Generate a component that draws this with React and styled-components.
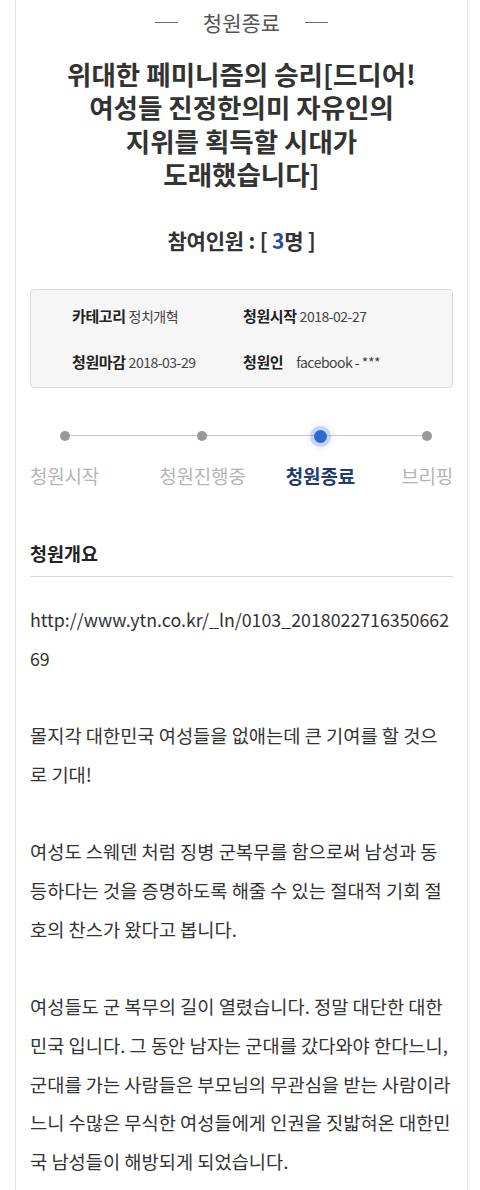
import React from 'react'
import styled, { createGlobalStyle } from 'styled-components'

const info = [
  { label: '카테고리', value: '정치개혁' },
  { label: '청원시작', value: '2018-02-27' },
  { label: '청원마감', value: '2018-03-29' },
  { label: '청원인', value: 'facebook - ***', wide: true },
]

const steps = [
  { label: '청원시작' },
  { label: '청원진행중', shift: true },
  { label: '청원종료', active: true },
  { label: '브리핑' },
]

const titleLines = [
  '위대한 페미니즘의 승리[드디어!',
  '여성들 진정한의미 자유인의',
  '지위를 획득할 시대가',
  '도래했습니다]',
]

// lines kept as the page breaks them
const paragraphs = [
  { url: true, lines: ['http://www.ytn.co.kr/_ln/0103_2018022716350662', '69'] },
  { lines: ['몰지각 대한민국 여성들을 없애는데 큰 기여를 할 것으', '로 기대!'] },
  {
    lines: [
      '여성도 스웨덴 처럼 징병 군복무를 함으로써 남성과 동',
      '등하다는 것을 증명하도록 해줄 수 있는 절대적 기회 절',
      '호의 찬스가 왔다고 봅니다.',
    ],
  },
  {
    lines: [
      '여성들도 군 복무의 길이 열렸습니다. 정말 대단한 대한',
      '민국 입니다. 그 동안 남자는 군대를 갔다와야 한다느니,',
      '군대를 가는 사람들은 부모님의 무관심을 받는 사람이라',
      '느니 수많은 무식한 여성들에게 인권을 짓밟혀온 대한민',
      '국 남성들이 해방되게 되었습니다.',
    ],
  },
]

export default function App() {
  return (
    <>
      <GlobalStyle />
      <Page>
        <Card>
          <Status>청원종료</Status>
          <Title>
            {titleLines.map((line) => (
              <TitleLine key={line}>{line}</TitleLine>
            ))}
          </Title>
          <Count>
            참여인원 : [ <Num>3</Num>명 ]
          </Count>

          <InfoBox>
            {info.map((item) => (
              <InfoItem key={item.label}>
                <InfoLabel>{item.label}</InfoLabel>
                <InfoValue $wide={item.wide}>{item.value}</InfoValue>
              </InfoItem>
            ))}
          </InfoBox>

          <Progress>
            <Track />
            {steps.map((s) => (
              <Step key={s.label} $shift={s.shift}>
                <DotWrap>
                  <Dot $active={s.active} />
                </DotWrap>
                <StepLabel $active={s.active}>{s.label}</StepLabel>
              </Step>
            ))}
          </Progress>

          <SectionTitle>청원개요</SectionTitle>
          <Body>
            {paragraphs.map((p, i) => (
              <Para key={i} $url={p.url}>
                {p.lines.map((l) => (
                  <Line key={l}>{l}</Line>
                ))}
              </Para>
            ))}
          </Body>
        </Card>
      </Page>
    </>
  )
}

const GlobalStyle = createGlobalStyle`
body{
  margin:0;
  background:#fff;
  font-family:"Noto Sans CJK KR","Noto Sans",sans-serif;
  color:#333;
}`

const Page = styled.div`
padding:0 12px 0 15px;`

const Card = styled.section`
border-left:1px solid #e4e4e4;
border-right:1px solid #e4e4e4;
padding:8px 14px 0 14px;
min-height:1190px;
box-sizing:border-box;`

const Status = styled.div`
display:flex;
justify-content:center;
align-items:center;
gap:25px;
font-size:21px;
line-height:28px;
color:#555;
&::before,&::after{
  content:'';
  width:23px;
  height:1px;
  background:#666;
}`

const Title = styled.h1`
margin:21px 0 0;
text-align:center;
font-size:26.5px;
font-weight:700;
color:#333;`

const TitleLine = styled.span`
display:block;
height:33.3px;
line-height:33.3px;`

const Count = styled.div`
margin-top:36px;
text-align:center;
font-size:21px;
line-height:28px;
font-weight:700;
letter-spacing:-0.2px;
color:#333;`

const Num = styled.span`
color:#1d4f9e;`

const InfoBox = styled.div`
margin-top:35px;
display:grid;
grid-template-columns:171px 1fr;
row-gap:26px;
padding:16px 20px 15px 41px;
background:#f6f6f6;
border:1px solid #dcdcdc;
border-radius:4px;`

const InfoItem = styled.div`
display:flex;
align-items:center;
line-height:20px;`

const InfoLabel = styled.span`
font-size:15px;
letter-spacing:-0.4px;
font-weight:700;
color:#222;
margin-right:3px;`

const InfoValue = styled.span`
font-size:14px;
letter-spacing:-0.5px;
color:#444;
margin-left:${(p) => (p.$wide ? '10px' : '0')};`

const Progress = styled.div`
position:relative;
margin-top:36px;
display:flex;
justify-content:space-between;`

const Track = styled.div`
position:absolute;
top:11px;
left:34px;
right:26px;
height:1px;
background:#c8c8c8;`

const Step = styled.div`
position:relative;
display:flex;
flex-direction:column;
align-items:center;
margin-left:${(p) => (p.$shift ? '14px' : '0')};
margin-right:${(p) => (p.$shift ? '-6px' : '0')};`

const DotWrap = styled.div`
height:24px;
display:flex;
align-items:center;
justify-content:center;`

const Dot = styled.span`
display:block;
width:${(p) => (p.$active ? '13px' : '10px')};
height:${(p) => (p.$active ? '13px' : '10px')};
border-radius:50%;
background:${(p) => (p.$active ? '#2e6ad1' : '#999')};
box-shadow:${(p) => (p.$active ? '0 0 0 4px rgba(46,106,209,0.2), 0 0 6px 5px rgba(46,106,209,0.12)' : 'none')};`

const StepLabel = styled.span`
margin-top:15px;
font-size:19px;
line-height:25px;
letter-spacing:-0.2px;
font-weight:${(p) => (p.$active ? 700 : 400)};
color:${(p) => (p.$active ? '#1f3c70' : '#b5b5b5')};`

const SectionTitle = styled.h2`
margin:52px 0 0;
padding-bottom:10px;
border-bottom:1px solid #d8d8d8;
font-size:18.5px;
line-height:26px;
font-weight:700;
color:#222;`

const Body = styled.div`
margin-top:23px;
font-size:18.7px;
line-height:38.7px;
color:#333;`

const Para = styled.p`
margin:0 0 38.7px;
font-size:${(p) => (p.$url ? '17.8px' : 'inherit')};
&:last-child{
  margin-bottom:0;
}`

const Line = styled.span`
display:block;
white-space:nowrap;`
